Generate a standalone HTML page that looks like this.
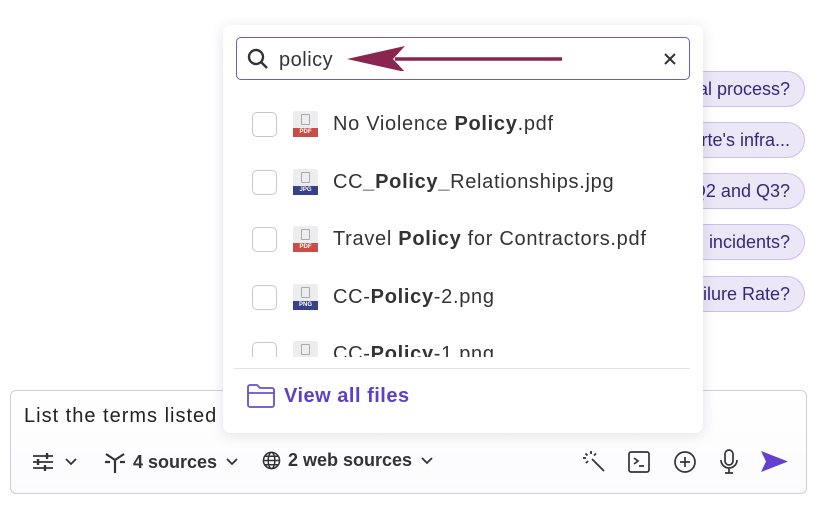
<!DOCTYPE html>
<html><head><meta charset="utf-8"><style>
*{box-sizing:border-box;margin:0;padding:0}
body{width:830px;height:506px;overflow:hidden;background:#fff;font-family:"Liberation Sans",sans-serif;position:relative;color:#2b2b2b}
.pill{position:absolute;right:25px;height:36px;border:1px solid #cdbdf0;background:#ece7f7;border-radius:18px;color:#35287a;font-size:18px;line-height:34px;padding:0 14px 0 40px;white-space:nowrap}
.fade{position:absolute;left:640px;top:60px;width:60px;height:270px;background:linear-gradient(90deg,#fff,rgba(255,255,255,0))}
.inputbox{position:absolute;left:10px;top:390px;width:797px;height:104px;border:1px solid #cfcfd4;border-radius:6px;background:linear-gradient(#fff,#fbfbfd)}
.pop{position:absolute;left:223px;top:25px;width:480px;height:408px;background:#fff;border-radius:8px;box-shadow:0 2px 14px rgba(40,30,80,.13)}
.search{position:absolute;left:13px;top:12px;width:454px;height:43px;border:1.5px solid #6a5bd0;border-radius:5px}
.row{position:absolute;left:29px;height:30px;display:flex;align-items:center;font-size:20px;color:#333;letter-spacing:0.7px;white-space:nowrap}
.cb{width:25px;height:25px;border:1.5px solid #c8c8cc;border-radius:5px;margin-right:16px}
.fi{width:25px;height:26px;position:relative;margin-right:15px;background:#ededf0;border-radius:2px}
.fi i{position:absolute;left:8px;top:3px;width:9px;height:11px;border:1px solid #aaa;border-radius:1px}
.fi span{position:absolute;left:0;bottom:0;width:25px;height:9px;color:#fff;font-size:6px;font-weight:bold;text-align:center;line-height:9px;letter-spacing:0}
.tb{position:absolute;top:450px;font-size:18px;font-weight:bold;color:#333;display:flex;align-items:center}
</style></head><body>
<div class="pill" style="top:71px">al process?</div>
<div class="pill" style="top:122px">rte's infra...</div>
<div class="pill" style="top:173px">Q2 and Q3?</div>
<div class="pill" style="top:224px">incidents?</div>
<div class="pill" style="top:276px">ilure Rate?</div>
<div class="fade"></div>

<div class="inputbox"></div>
<div style="position:absolute;left:24px;top:405px;font-size:20px;color:#222;letter-spacing:1px">List the terms listed</div>
<svg style="position:absolute;left:32px;top:452px" width="50" height="20" viewBox="0 0 50 20" fill="none" stroke="#333" stroke-width="1.8"><path d="M1 4h20M1 10h20M1 16h20"/><path d="M15 1v6M6 7v6M13 13v6" stroke-width="2.4"/><path d="M34 7l5 5 5-5"/></svg>
<div class="tb" style="left:103px"><svg width="24" height="24" viewBox="0 0 24 24" stroke="#333" stroke-width="2.2" fill="none"><path d="M12 10v13M12 10L3 4M12 10l9-6M2 12h5M17 12h5"/></svg><span style="margin-left:6px">4 sources</span><svg style="margin-left:8px" width="14" height="10" viewBox="0 0 14 10" fill="none" stroke="#333" stroke-width="1.8"><path d="M2 2l5 5 5-5"/></svg></div>
<div class="tb" style="left:262px"><svg width="19" height="19" viewBox="0 0 20 20" fill="none" stroke="#333" stroke-width="1.6"><circle cx="10" cy="10" r="8.5"/><ellipse cx="10" cy="10" rx="3.5" ry="8.5"/><path d="M1.5 10h17M3 5.5h14M3 14.5h14"/></svg><span style="margin-left:7px">2 web sources</span><svg style="margin-left:8px" width="14" height="10" viewBox="0 0 14 10" fill="none" stroke="#333" stroke-width="1.8"><path d="M2 2l5 5 5-5"/></svg></div>
<svg style="position:absolute;left:583px;top:450px" width="24" height="24" viewBox="0 0 24 24" fill="none" stroke="#333" stroke-width="1.8"><path d="M9 9l12 12"/><path d="M8 1v3M3 8H0M2.5 3.5l2 2M13 3.5l-2 2M3 13l2-2"/></svg>
<svg style="position:absolute;left:628px;top:451px" width="22" height="22" viewBox="0 0 22 22" fill="none" stroke="#333" stroke-width="1.7"><rect x="1" y="1" width="20" height="20" rx="2"/><path d="M6 7l4 3-4 3M11 15h5"/></svg>
<svg style="position:absolute;left:673px;top:450px" width="24" height="24" viewBox="0 0 24 24" fill="none" stroke="#333" stroke-width="1.7"><circle cx="12" cy="12" r="10"/><path d="M12 7v10M7 12h10"/></svg>
<svg style="position:absolute;left:719px;top:449px" width="20" height="26" viewBox="0 0 20 26" fill="none" stroke="#333" stroke-width="1.7"><rect x="6" y="1" width="8" height="15" rx="4"/><path d="M2 11a8 8 0 0 0 16 0M10 19v5M6 24h8"/></svg>
<svg style="position:absolute;left:761px;top:451px" width="27" height="21" viewBox="0 0 27 21"><path d="M0 0L27 10.5L0 21L5 10.5Z" fill="#6540d0"/></svg>

<div class="pop">
 <div class="search">
  <svg style="position:absolute;left:10px;top:10px" width="22" height="22" viewBox="0 0 22 22" fill="none" stroke="#333" stroke-width="2.4"><circle cx="9" cy="9" r="7"/><path d="M14 14l6 6"/></svg>
  <div style="position:absolute;left:42px;top:11px;font-size:20px;color:#333;letter-spacing:0.5px">policy</div>
  <svg style="position:absolute;left:108px;top:7px" width="220" height="26" viewBox="0 0 220 26"><path d="M217 14H50" stroke="#8a2550" stroke-width="3.5"/><path d="M2 14L60 1L48 14L60 27Z" fill="#8a2550"/></svg>
  <svg style="position:absolute;left:427px;top:15px" width="12" height="12" viewBox="0 0 12 12" stroke="#333" stroke-width="2"><path d="M1 1l10 10M11 1L1 11"/></svg>
 </div>
 <div class="row" style="top:84px"><div class="cb"></div><div class="fi"><i></i><span style="background:#cc4c45">PDF</span></div><div>No Violence <b>Policy</b>.pdf</div></div>
 <div class="row" style="top:142px"><div class="cb"></div><div class="fi"><i></i><span style="background:#37418a">JPG</span></div><div>CC<b>_Policy_</b>Relationships.jpg</div></div>
 <div class="row" style="top:199px"><div class="cb"></div><div class="fi"><i></i><span style="background:#cc4c45">PDF</span></div><div>Travel <b>Policy</b> for Contractors.pdf</div></div>
 <div class="row" style="top:257px"><div class="cb"></div><div class="fi"><i></i><span style="background:#37418a">PNG</span></div><div>CC-<b>Policy</b>-2.png</div></div>
 <div style="position:absolute;left:0;top:310px;width:480px;height:22px;overflow:hidden"><div class="row" style="top:4px"><div class="cb"></div><div class="fi"><i></i></div><div>CC-<b>Policy</b>-1.png</div></div></div>
 <div style="position:absolute;left:11px;top:343px;width:456px;height:1px;background:#e2e2e6"></div>
 <svg style="position:absolute;left:24px;top:359px" width="29" height="24" viewBox="0 0 29 24" fill="none" stroke="#6a4fd0" stroke-width="1.8"><path d="M1 3a2 2 0 0 1 2-2h7l3 3h12a2 2 0 0 1 2 2v15a2 2 0 0 1-2 2H3a2 2 0 0 1-2-2z"/><path d="M1 9h26"/></svg>
 <div style="position:absolute;left:61px;top:360px;font-size:20px;font-weight:bold;color:#5e3fcc;letter-spacing:0.5px">View all files</div>
</div>
</body></html>
